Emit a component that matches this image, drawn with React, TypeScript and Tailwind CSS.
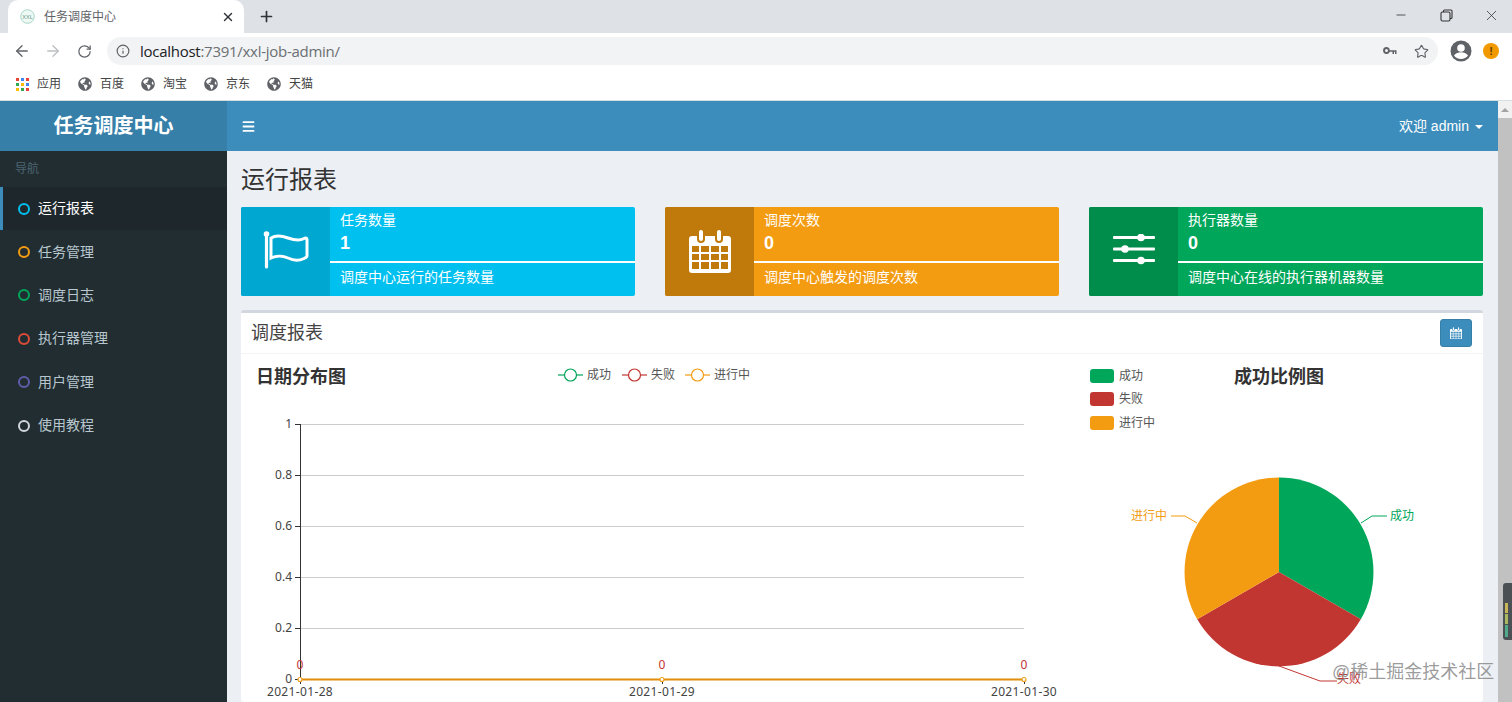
import { ArrowLeft, ArrowRight, Info, Menu, Minus, Plus, RotateCw, Star, X } from "lucide-react";
import { FaGlobeAmericas } from "react-icons/fa";

const cjk = "font-['Liberation_Sans','Noto_Sans_CJK_SC',sans-serif]";
const axisFont = "font-['Noto_Sans','Noto_Sans_CJK_SC',sans-serif]";

const bookmarks = ["百度", "淘宝", "京东", "天猫"];

const navItems = [
  { label: "运行报表", ring: "border-[#00c0ef]", active: true },
  { label: "任务管理", ring: "border-[#f39c12]" },
  { label: "调度日志", ring: "border-[#00a65a]" },
  { label: "执行器管理", ring: "border-[#dd4b39]" },
  { label: "用户管理", ring: "border-[#605ca8]" },
  { label: "使用教程", ring: "border-[#d2d6de]" },
];

const appsDots = ["#ea4335", "#4285f4", "#ea4335", "#34a853", "#fbbc05", "#4285f4", "#fbbc05", "#34a853", "#ea4335"];

function FlagIcon() {
  return (
    <svg width="46" height="38" viewBox="0 0 46 38" fill="none" stroke="white" className="mb-[3px]">
      <circle cx="3.500" cy="3" r="2.800" fill="white" stroke="none" />
      <path d="M3.500 4V36" strokeWidth="3.200" strokeLinecap="round" />
      <path d="M8 7c5-3 10-2.500 17 0s12 3 16 .5c2-1 3-.5 3 1V25c0 1-1 1.500-3 2.500-5 2.500-11 2-16-.5s-12-2.500-17 0V7z" strokeWidth="3" />
    </svg>
  );
}

function CalendarIcon({ size = 42 }: { size?: number }) {
  return (
    <svg width={size} height={size * 1.05} viewBox="0 0 42 44" fill="white">
      <path
        fillRule="evenodd"
        d="M3 7h5v3a4 4 0 0 0 8 0V7h10v3a4 4 0 0 0 8 0V7h5a3 3 0 0 1 3 3v31a3 3 0 0 1-3 3H3a3 3 0 0 1-3-3V10a3 3 0 0 1 3-3zM3 17v6h7v-6zm9 0v6h8v-6zm10 0v6h8v-6zm10 0v6h7v-6zM3 25v6h7v-6zm9 0v6h8v-6zm10 0v6h8v-6zm10 0v6h7v-6zM3 33v7h7v-7zm9 0v7h8v-7zm10 0v7h8v-7zm10 0v7h7v-7z"
      />
      <rect x="10" y="1" width="4" height="11" rx="2" />
      <rect x="28" y="1" width="4" height="11" rx="2" />
    </svg>
  );
}

function SlidersIcon() {
  return (
    <svg width="42" height="36" viewBox="0 0 42 36" fill="white">
      <rect x="0" y="2" width="42" height="3" rx="1" />
      <rect x="0" y="13.500" width="42" height="3" rx="1" />
      <rect x="0" y="25" width="42" height="3" rx="1" />
      <circle cx="28" cy="3.500" r="3.800" />
      <circle cx="12" cy="15" r="3.800" />
      <circle cx="28" cy="26.500" r="3.800" />
    </svg>
  );
}

function InfoBox({
  icon,
  title,
  value,
  desc,
  bg,
  iconBg,
}: {
  icon: React.ReactNode;
  title: string;
  value: string;
  desc: string;
  bg: string;
  iconBg: string;
}) {
  return (
    <div className={`flex h-[89px] overflow-hidden rounded-[2px] text-white ${bg}`}>
      <div className={`flex w-[89px] shrink-0 items-center justify-center ${iconBg}`}>{icon}</div>
      <div className="flex min-w-0 flex-1 flex-col">
        <div className="h-[56px] border-b-2 border-white px-[10px] pt-[5px]">
          <div className="text-[14px] leading-[17px]">{title}</div>
          <div className="mt-[1px] text-[18px] leading-[26px] font-bold">{value}</div>
        </div>
        <div className="px-[10px] pt-[4px] text-[14px] leading-[20px]">{desc}</div>
      </div>
    </div>
  );
}

function LineChart() {
  const ticks = [
    { label: "1", y: 424 },
    { label: "0.8", y: 475 },
    { label: "0.6", y: 526 },
    { label: "0.4", y: 577 },
    { label: "0.2", y: 628 },
    { label: "0", y: 679 },
  ];
  const xs = [
    { x: 300, label: "2021-01-28" },
    { x: 662, label: "2021-01-29" },
    { x: 1024, label: "2021-01-30" },
  ];
  const legend = [
    { x: 558, color: "#00a65a", label: "成功" },
    { x: 622, color: "#c23632", label: "失败" },
    { x: 685, color: "#f39c12", label: "进行中" },
  ];
  return (
    <svg width="834" height="348" viewBox="241 354 834 348" className="shrink-0">
      <text x="256" y="383" fontSize="18" fontWeight="700" fill="#333">
        日期分布图
      </text>
      {legend.map((l) => (
        <g key={l.label}>
          <path d={`M${l.x} 375h25`} stroke={l.color} strokeWidth="1.200" />
          <circle cx={l.x + 12.5} cy="375" r="6" fill="white" stroke={l.color} strokeWidth="1.200" />
          <text x={l.x + 29} y="379" fontSize="12" fill="#555">
            {l.label}
          </text>
        </g>
      ))}
      {ticks.map((t) => (
        <g key={t.label}>
          {t.y !== 679 && <path d={`M300 ${t.y + 0.5}H1024`} stroke="#ccc" />}
          <path d={`M295 ${t.y + 0.5}H300`} stroke="#333" />
          <text x="292" y={t.y + 4} textAnchor="end" fontSize="12" fill="#444" className={axisFont}>
            {t.label}
          </text>
        </g>
      ))}
      <path d="M300.500 424V684" stroke="#333" />
      <path d="M300 679.500H1024" stroke="#e08e0b" strokeWidth="2.200" />
      {xs.map((p) => (
        <g key={p.x}>
          <path d={`M${p.x + 0.5} 679V684`} stroke="#333" />
          <circle cx={p.x} cy="679.500" r="2" fill="white" stroke="#f0a020" strokeWidth="1.200" />
          <text x={p.x} y="669" textAnchor="middle" fontSize="12" fill="#c23632" className={axisFont}>
            0
          </text>
          <text x={p.x} y="696" textAnchor="middle" fontSize="12" letterSpacing="0.35" fill="#444" className={axisFont}>
            {p.label}
          </text>
        </g>
      ))}
    </svg>
  );
}

function PieChart() {
  const legend = [
    { y: 369, color: "#00a65a", label: "成功" },
    { y: 392, color: "#c23632", label: "失败" },
    { y: 416, color: "#f39c12", label: "进行中" },
  ];
  return (
    <svg width="408" height="348" viewBox="1075 354 408 348" className="shrink-0">
      {legend.map((l) => (
        <g key={l.label}>
          <rect x="1090" y={l.y} width="24" height="14" rx="3" fill={l.color} />
          <text x="1119" y={l.y + 11} fontSize="12" fill="#555">
            {l.label}
          </text>
        </g>
      ))}
      <text x="1279" y="383" textAnchor="middle" fontSize="18" fontWeight="700" fill="#333">
        成功比例图
      </text>
      <path d="M1279 572V477.500A94.500 94.500 0 0 1 1360.800 619.250Z" fill="#00a65a" />
      <path d="M1279 572L1360.800 619.250A94.500 94.500 0 0 1 1197.200 619.250Z" fill="#c23632" />
      <path d="M1279 572L1197.200 619.250A94.500 94.500 0 0 1 1279 477.500Z" fill="#f39c12" />
      <path d="M1361 523L1372 516H1387" fill="none" stroke="#00a65a" />
      <text x="1390" y="520" fontSize="12" fill="#00a65a">
        成功
      </text>
      <path d="M1197 523L1185 516H1171" fill="none" stroke="#f39c12" />
      <text x="1167" y="520" textAnchor="end" fontSize="12" fill="#f39c12">
        进行中
      </text>
      <path d="M1279 666L1320 681H1337" fill="none" stroke="#c23632" />
      <text x="1337" y="683" fontSize="12" fill="#c23632">
        失败
      </text>
    </svg>
  );
}

export default function App() {
  return (
    <div className={`relative flex h-[702px] w-[1512px] flex-col overflow-hidden bg-white ${cjk}`}>
      {/* browser chrome */}
      <div className="flex h-[33px] shrink-0 items-end bg-[#dee1e6] pl-2">
        <div className="flex h-[33px] w-[236px] items-center rounded-t-[10px] bg-white pl-[12px] pr-[9px]">
          <svg width="15" height="15" viewBox="0 0 15 15" className="shrink-0">
            <circle cx="7.500" cy="7.500" r="6.800" fill="#eef8f4" stroke="#a5d8c5" />
            <text x="7.500" y="9.500" textAnchor="middle" fontSize="5.500" fill="#6a9c8a">
              XXL
            </text>
          </svg>
          <span className="ml-[9px] flex-1 text-[12px] text-[#5f6368]">任务调度中心</span>
          <X size={14} strokeWidth={2.4} className="text-[#303338]" />
        </div>
        <Plus size={17} strokeWidth={2.4} className="mb-[8px] ml-[14px] text-[#303338]" />
        <div className="ml-auto flex h-full items-start">
          <div className="flex h-[30px] w-[42px] items-center justify-center">
            <Minus size={14} strokeWidth={1.4} className="text-[#333]" />
          </div>
          <div className="flex h-[30px] w-[48px] items-center justify-center">
            <svg width="13" height="13" viewBox="0 0 13 13" fill="none" stroke="#333" strokeWidth="1.100">
              <rect x="1" y="3" width="9" height="9" rx="1.500" />
              <path d="M3.500 3V2a1 1 0 0 1 1-1H11a1 1 0 0 1 1 1v6.500a1 1 0 0 1-1 1h-1" />
            </svg>
          </div>
          <div className="flex h-[30px] w-[42px] items-center justify-center">
            <X size={17} strokeWidth={1.1} className="text-[#333]" />
          </div>
        </div>
      </div>
      <div className="flex h-[33px] shrink-0 items-center bg-white pl-[13px] pt-[3px]">
        <ArrowLeft size={18} strokeWidth={1.8} className="text-[#5f6368]" />
        <ArrowRight size={18} strokeWidth={1.8} className="ml-[13px] text-[#bcbfc3]" />
        <RotateCw size={15} strokeWidth={2} className="ml-[15px] text-[#5f6368]" />
        <div className="ml-[15px] flex h-[28px] w-[1331px] items-center rounded-full bg-[#f1f3f4] pl-[9px] pr-[9px]">
          <Info size={14} strokeWidth={2} className="text-[#5f6368]" />
          <span className="ml-[10px] font-['Open_Sans',sans-serif] text-[15px] tracking-[-0.27px] text-[#202124]">
            localhost
            <span className="text-[#6b6f73]">:7391/xxl-job-admin/</span>
          </span>
          <svg width="14" height="10" viewBox="0 0 14 10" fill="#5f6368" className="ml-auto">
            <path
              fillRule="evenodd"
              d="M3.500 1A3.500 3.500 0 1 0 6.800 5.800H9.500V8H11V5.800h1V8h1.500V4.200H6.800A3.500 3.500 0 0 0 3.500 1zm0 2a1.500 1.500 0 1 1 0 3 1.500 1.500 0 0 1 0-3z"
            />
          </svg>
          <Star size={15} strokeWidth={1.8} className="ml-[17px] text-[#5f6368]" />
        </div>
        <svg width="22" height="22" viewBox="0 0 22 22" className="ml-[12px] shrink-0">
          <circle cx="11" cy="11" r="10.500" fill="#5f6368" />
          <circle cx="11" cy="8" r="3.800" fill="white" />
          <path d="M4 15.500c1.500-2.500 4.500-3.300 7-3.300s5.500.8 7 3.300c-1.500 2.200-4 3.500-7 3.500s-5.500-1.300-7-3.500z" fill="white" />
        </svg>
        <div className="ml-[11px] flex size-[16px] shrink-0 items-center justify-center rounded-full bg-[#f29900] text-[11px] leading-none font-bold text-[#5f4000]">
          !
        </div>
      </div>
      <div className="flex h-[34px] shrink-0 items-center bg-white pl-[16px] pt-[2px] text-[12px] text-[#444]">
        <div className="grid size-[13px] grid-cols-3 gap-[2px]">
          {appsDots.map((c, i) => (
            <span key={i} className="size-[3px]" style={{ backgroundColor: c }} />
          ))}
        </div>
        <span className="ml-[8px] w-[41px]">应用</span>
        {bookmarks.map((b) => (
          <div key={b} className="flex w-[63px] items-center">
            <FaGlobeAmericas size={14} className="shrink-0 text-[#5f6368]" />
            <span className="ml-[8px]">{b}</span>
          </div>
        ))}
      </div>

      {/* admin page */}
      <div className="flex min-h-0 flex-1 border-t border-[#d5dde0]">
        <aside className="w-[227px] shrink-0 bg-[#222d32]">
          <div className="flex h-[50px] items-center justify-center bg-[#367fa9] text-[20px] font-bold text-white">
            任务调度中心
          </div>
          <div className="h-[36px] pl-[15px] pt-[11px] text-[12px] leading-[14px] text-[#4b646f]">导航</div>
          <nav>
            {navItems.map((item) => (
              <div
                key={item.label}
                className={`flex h-[43.4px] items-center border-l-[3px] pl-[15px] text-[14px] ${
                  item.active
                    ? "border-[#3c8dbc] bg-[#1e282c] text-white"
                    : "border-transparent text-[#b8c7ce]"
                }`}
              >
                <span className={`size-[12px] rounded-full border-2 ${item.ring}`} />
                <span className="ml-[8px]">{item.label}</span>
              </div>
            ))}
          </nav>
        </aside>
        <div className="flex min-w-0 flex-1 flex-col bg-[#ecf0f5]">
          <header className="flex h-[50px] shrink-0 items-center justify-between bg-[#3c8dbc] pl-[14px] pr-[15px] text-white">
            <Menu size={15} strokeWidth={3} />
            <div className="flex items-center text-[14px]">
              欢迎 admin
              <span className="ml-[6px] mt-[2px] size-0 border-x-[4px] border-t-[4px] border-x-transparent border-t-white" />
            </div>
          </header>
          <main className="min-h-0 flex-1 pl-[14px] pr-[15px]">
            <h1 className="pt-[14px] text-[24px] leading-[30px] text-[#333]">运行报表</h1>
            <div className="mt-[12px] grid grid-cols-3 gap-[30px]">
              <InfoBox
                icon={<FlagIcon />}
                title="任务数量"
                value="1"
                desc="调度中心运行的任务数量"
                bg="bg-[#00c0ef]"
                iconBg="bg-[#00a7d0]"
              />
              <InfoBox
                icon={<CalendarIcon />}
                title="调度次数"
                value="0"
                desc="调度中心触发的调度次数"
                bg="bg-[#f39c12]"
                iconBg="bg-[#c07a0c]"
              />
              <InfoBox
                icon={<SlidersIcon />}
                title="执行器数量"
                value="0"
                desc="调度中心在线的执行器机器数量"
                bg="bg-[#00a65a]"
                iconBg="bg-[#008d4c]"
              />
            </div>
            <section className="mt-[14px] rounded-[3px] border-t-[3px] border-[#d2d6de] bg-white">
              <div className="flex h-[41px] items-center justify-between border-b border-[#f4f4f4] pl-[10px] pr-[11px]">
                <h3 className="text-[18px] text-[#444]">调度报表</h3>
                <button
                  type="button"
                  className="flex h-[28px] w-[32px] items-center justify-center rounded-[3px] border border-[#367fa9] bg-[#3c8dbc]"
                >
                  <CalendarIcon size={12} />
                </button>
              </div>
              <div className="flex">
                <LineChart />
                <PieChart />
              </div>
            </section>
          </main>
        </div>
        <div className="flex w-[14px] shrink-0 flex-col bg-[#f1f1f1]">
          <div className="flex h-[17px] items-center justify-center">
            <span className="size-0 border-x-[4px] border-b-[4px] border-x-transparent border-b-[#a3a3a3]" />
          </div>
          <div className="flex-1 bg-[#c1c1c1]" />
        </div>
      </div>

      {/* clipped desktop widget */}
      <div className="absolute left-[1503px] top-[583px] flex h-[57px] w-[12px] flex-col justify-end gap-px rounded-l-[3px] bg-[#4a5054] pb-[3px] pl-[2px]">
        <span className="h-[10px] w-[3px] bg-[#c9b458]" />
        <span className="h-[10px] w-[3px] bg-[#a9b860]" />
        <span className="h-[12px] w-[3px] bg-[#52a98a]" />
      </div>
      <div className="absolute left-[1332px] top-[659px] text-[18px] leading-[26px] text-[#8a8a8a]/85">
        @稀土掘金技术社区
      </div>
    </div>
  );
}
